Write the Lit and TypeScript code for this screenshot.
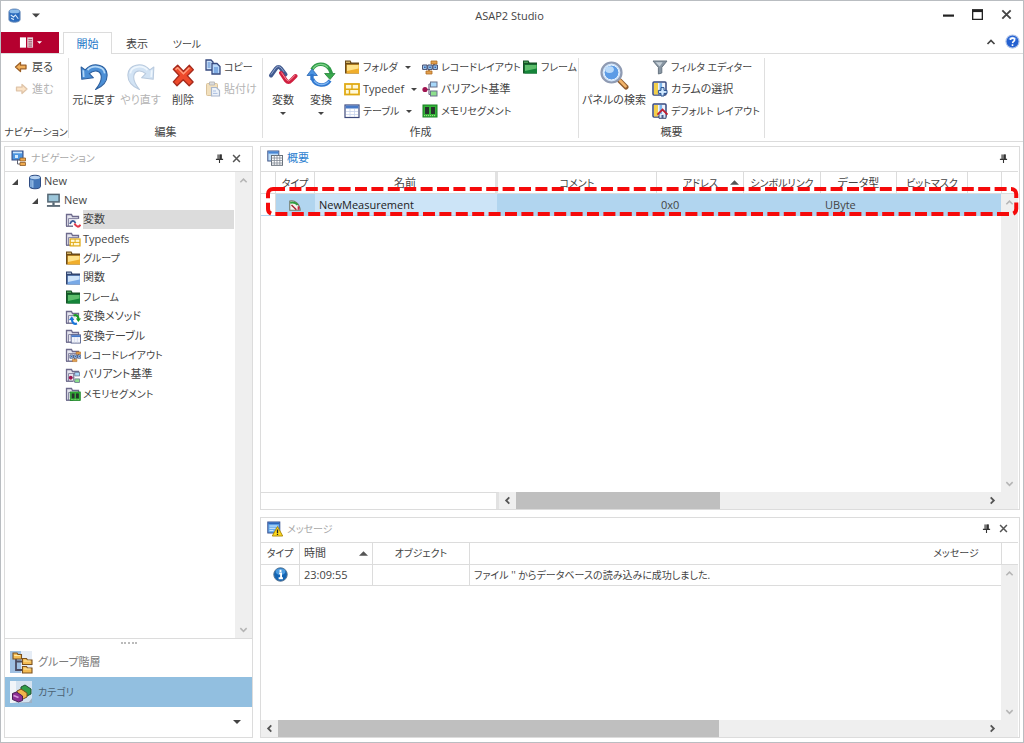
import { LitElement, html, css, svg, nothing, TemplateResult } from "lit";
import { customElement, property } from "lit/decorators.js";
import { classMap } from "lit/directives/class-map.js";

const folderBase = svg`
  <path d="M1.5 14V2.5h5l1 2h6V7" fill="#e4e4ee" stroke="#6d6a8c" stroke-width="1.3"/>
  <path d="M3.5 14V6.5h10" fill="none" stroke="#8c8aa6"/>
  <path d="M1 14.2h7" stroke="#6d6a8c" stroke-width="1.4"/>`;

const folder = (edge: string, light: string, dark: string) => svg`
  <path d="M1 14.500V1.500h5.500l1 2H15v11z" fill="${edge}"/>
  <path d="M2.500 5.500h12.500v9H2.500z" fill="${dark}"/>
  <path d="M3 6h11.500v3.500L3 12z" fill="${light}"/>
  <path d="M2 3.200h4" stroke="${light}" stroke-width="1"/>`;

const recordShape = svg`
  <path d="M9 2h6v3H9zM4 12h6v3H4z" fill="#e3a04e" stroke="#b06d22" stroke-width=".8"/>
  <path d="M12 5v2M7 10v2" stroke="#96611f" stroke-width="1.4"/>
  <path d="M.6 6h4.4v4.4H.6zM5.8 6h4.4v4.4H5.8zM11 6h4.4v4.4H11z" fill="#a9d0f5" stroke="#41486c" stroke-width="1"/>
  <path d="M2 8.2h1.7M7.2 8.2h1.7M12.4 8.2h1.7" stroke="#2d68b5" stroke-width="1.4"/>`;

const variantShape = svg`
  <path d="M3 8.5h5M7 3v10.5M7 3h3M7 13.5h3" fill="none" stroke="#706888" stroke-width="1.2"/>
  <circle cx="3" cy="8.5" r="2.6" fill="#a01450"/>
  <rect x="8.5" y="1" width="6.5" height="5" fill="#a8d8fa" stroke="#66718c"/>
  <rect x="8.5" y="10" width="6.5" height="5" fill="#8de08d" stroke="#66718c"/>`;

const memoryShape = svg`
  <rect x="1" y="2" width="14" height="12" fill="#35b53a" stroke="#178020"/>
  <rect x="3" y="4" width="4" height="7" fill="#26342c"/><rect x="9" y="4" width="4" height="7" fill="#26342c"/>
  <path d="M2 12.6h12" stroke="#a9e08a" stroke-dasharray="1 1"/>`;

const tableShape = svg`
  <rect x="1" y="2" width="14" height="12.5" fill="#fff" stroke="#3e4a7c" stroke-width="1.2"/>
  <path d="M1.5 2.5h13v3h-13z" fill="#4779c8"/>
  <path d="M6 6v8M10.5 6v8M2 8.5h12M2 11.5h12" stroke="#c9d4ee" stroke-width=".8"/>`;

const typedefShape = svg`
  <rect x="1" y="3" width="14" height="10.5" fill="#fff8d8" stroke="#e0aa14" stroke-width="1.8"/>
  <path d="M1 8.2h14M8 3v5.200M5.500 8.200v5" stroke="#e0aa14" stroke-width="1.400"/>`;

const cycleShape = svg`
  <path d="M6 9.5A10 10 0 0 1 23 8.5" fill="none" stroke="#2f9b48" stroke-width="3.6"/>
  <path d="M7 8.6A9.4 9.4 0 0 1 22 7.6" fill="none" stroke="#7fd28a" stroke-width="1.2"/>
  <path d="M18.6 13.5H29l-5 6z" fill="#39aa4d" stroke="#25803a" stroke-width=".8"/>
  <path d="M24 20.5A10 10 0 0 1 6.5 19" fill="none" stroke="#2f77cf" stroke-width="3.6"/>
  <path d="M22.8 21.4A9.4 9.4 0 0 1 8 20.6" fill="none" stroke="#83b8f2" stroke-width="1.2"/>
  <path d="M1 15.5 6 9l5.4 6.5z" fill="#4a93e2" stroke="#2b65b0" stroke-width=".8"/>
  <path d="M23 8l2.5 5.5" stroke="#2f9b48" stroke-width="3.4"/>
  <path d="M6 14v6" stroke="#2f77cf" stroke-width="3.4"/>`;

const filterBook = svg`
  <rect x="1" y="1" width="13" height="13" rx="1" fill="#eef3fc" stroke="#37497f" stroke-width="1.5"/>
  <path d="M2 2h4v11.5H2z" fill="#f3cf4b"/><path d="M7.5 2h2.6v11.5H7.5z" fill="#7fb6ec"/>`;

const undoPath = "M2 6.5 2.6 18 13.5 16.6 9.6 12.8C14 8.6 20.5 9.6 20.8 15.6 21 19.6 18.6 23.6 15.4 27.6 22.6 24.4 26.6 19 26.2 13.4 25.6 4.4 13.4 1 5.8 9.2z";

const ICONS: Record<string, [string, TemplateResult | unknown]> = {
  app: ["0 0 16 16", svg`
    <path d="M2 4c0-4 12-4 12 0v8.5c0 3.6-12 3.6-12 0z" fill="#2b6bbd" stroke="#7795bd"/>
    <ellipse cx="8" cy="3.6" rx="5.4" ry="2" fill="#8fbdea"/>
    <path d="M4 7.5l3 2 2-2 3 4M4.4 11l3 1.4" stroke="#d5e8fb" fill="none" stroke-width="1.2"/>`],
  menu: ["0 0 16 16", svg`
    <path d="M1 2.5h6.5v11H1z" fill="#fff"/><path d="M8.8 2.5H15v11H8.8z" fill="#e9d4da"/>
    <path d="M10 5h4M10 7.3h4M10 9.6h4M10 11.8h4" stroke="#8b3b50" stroke-width="1"/>`],
  back: ["0 0 16 16", svg`<path d="M2.500 8 7.500 3.500v2.700h5.500v3.600H7.500v2.700z" fill="#f2b05a" stroke="#9c5f24" stroke-width="1.300" stroke-linejoin="round"/>`],
  forward: ["0 0 16 16", svg`<path d="M14 8 9 3.500v2.700H3.500v3.600H9v2.700z" fill="#fbe3c6" stroke="#dfc4a8" stroke-width="1.300" stroke-linejoin="round"/>`],
  undo: ["0 0 28 28", svg`<path d="${undoPath}" fill="#4b8fd6" stroke="#2d5f9e" stroke-linejoin="round"/>
    <path d="M4 9.5l.4 6.4M8 9.4c4.4-5 15-4 16 3" fill="none" stroke="#b4d8f7" stroke-width="1.6"/>`],
  redo: ["0 0 28 28", svg`<g transform="translate(28 0) scale(-1 1)"><path d="${undoPath}" fill="#d2e3f4" stroke="#b9cade" stroke-linejoin="round"/>
    <path d="M4 9.5l.4 6.4M8 9.4c4.4-5 15-4 16 3" fill="none" stroke="#eef6fd" stroke-width="1.6"/></g>`],
  remove: ["0 0 28 28", svg`<path d="M5 8.6 9 5l5.4 5.6L20 5l3.6 4-5.6 5.6 5.4 6-3.6 3.4-5.6-5.6L8.4 24 5 20.4l5.4-6z" fill="#ee4a2b" stroke="#a52a1c" stroke-width="1.3" stroke-linejoin="round"/>
    <path d="M7 9l2-1.8 5.4 5.6L20 7.2" fill="none" stroke="#ff9c7c" stroke-width="1.4"/>`],
  copy: ["0 0 16 16", svg`<path d="M1 1h5l2 2v8H1z" fill="#cfe3fa" stroke="#36497f" stroke-width="1.3"/>
    <path d="M7 4.5h5l3 3V15H7z" fill="#b8d8fa" stroke="#36497f" stroke-width="1.3"/><path d="M9 9h4M9 11h4M9 13h4M2.6 4h3M2.6 6h3M2.6 8h3" stroke="#3c78c8" stroke-width=".9"/>`],
  paste: ["0 0 16 16", svg`<rect x="1.5" y="2.5" width="11" height="12" rx="1" fill="#f2e0bd" stroke="#d9c29b"/>
    <path d="M4.5 1h5v3h-5z" fill="#dcdcdc" stroke="#bbb"/><path d="M6.5 6.5h5l3 3V15h-8z" fill="#eef3fa" stroke="#a9b6cc" stroke-width="1.2"/><path d="M8 10h3M8 12.4h4.5" stroke="#a9bfe0"/>`],
  wave: ["0 0 30 30", svg`<path d="M3 15.500 8 8.500Q10.500 5.500 13 8.500L17.500 14.500" fill="none" stroke="#415a8f" stroke-width="4" stroke-linecap="round"/>
    <path d="M13 13 18 20.500Q20.500 23.500 23 20.500L27.500 16" fill="none" stroke="#d02040" stroke-width="4" stroke-linecap="round"/>
    <path d="M3 14.500 8 7.500Q10.500 4.800 13 7.800L16 11.800" fill="none" stroke="#92a6cd" stroke-width="1"/>
    <path d="M13.500 12.500 18.500 19.800Q20.500 22 22.500 19.800L27 15.200" fill="none" stroke="#f58c9c" stroke-width="1"/>`],
  cycle: ["0 0 30 30", cycleShape],
  folder: ["0 0 16 16", folder("#6b4b1a", "#ffe28a", "#f0ae2c")],
  folderBlue: ["0 0 16 16", folder("#33456f", "#cfe4fb", "#79a9e6")],
  folderGreen: ["0 0 16 16", folder("#175226", "#5dbd6b", "#15843a")],
  typedef: ["0 0 16 16", typedefShape],
  table: ["0 0 16 16", tableShape],
  record: ["0 0 16 16", recordShape],
  variant: ["0 0 16 16", variantShape],
  memory: ["0 0 16 16", memoryShape],
  search: ["0 0 30 30", svg`<path d="M19 19l8 8" stroke="#8e5a2c" stroke-width="5" stroke-linecap="round"/>
    <path d="M21 20.5l5.6 5.8" stroke="#f2b46a" stroke-width="2.6" stroke-linecap="round"/>
    <circle cx="12.5" cy="12.5" r="10" fill="#cfe4fa" stroke="#8f9bb3" stroke-width="2.2"/>
    <circle cx="12.5" cy="12.5" r="7.4" fill="#5c9ce6" stroke="#e9f3fd" stroke-width="1"/>
    <ellipse cx="10.5" cy="9.6" rx="4.4" ry="3.4" fill="#b9dafa"/>`],
  filter: ["0 0 16 16", svg`<path d="M1 2h14L9.800 8.400V14l-3.400 1V8.400z" fill="#8896a3" stroke="#697682"/><path d="M3.600 3.200h7L7.600 7.400z" fill="#c6d0d8"/>`],
  columns: ["0 0 16 16", svg`${filterBook}<path d="M9 6.600h3V9.400h3v3h-3V15H9v-2.600H6.400v-3H9z" fill="#cfe8ff" stroke="#27508f"/>`],
  home: ["0 0 16 16", svg`${filterBook}<path d="M7 11v4.300h7V11" fill="#dbe9fa" stroke="#3b4a70"/><path d="M5.400 11.600 10.500 6.600l5 5" fill="none" stroke="#c01f30" stroke-width="1.800"/><path d="M9.500 12h2v3h-2z" fill="#4a5b8c"/>`],
  help: ["0 0 16 16", svg`<circle cx="8" cy="8" r="7" fill="#2460d0" stroke="#b0c4e8" stroke-width="1.200"/><path d="M3.500 5.500C5 2 11 2 12.500 5.500z" fill="#7daaf2"/>
    <path d="M5.700 6.400C6 3.600 10.600 3.800 10.200 6.600 10 8 8.200 8 8.100 9.700M8 11v1.700" fill="none" stroke="#fff" stroke-width="1.700"/>`],
  nav: ["0 0 16 16", svg`<rect x="1" y="1" width="11" height="9" fill="#4c95e0" stroke="#35487f"/><path d="M2 2.500h9" stroke="#cfe6fc" stroke-width="1.600"/>
    <path d="M4 5h3v3H4z" fill="#d3e9fd"/><path d="M6.500 9v5h3" fill="none" stroke="#5f6272"/><path d="M9 8h5.500v3H9zM9 12.500h5.500v3H9z" fill="#efaa4e" stroke="#8f5c24" stroke-width=".8"/>`],
  overview: ["0 0 16 16", svg`<rect x=".8" y="1" width="11" height="10" fill="#bcdcf8" stroke="#3f5486"/><path d="M1.300 2.500h10" stroke="#4786d6" stroke-width="2.200"/>
    <rect x="4.500" y="5.500" width="11" height="9.800" fill="#fff" stroke="#666f7a"/><path d="M4.500 8h11M4.500 10.500h11M4.500 13h11M7.300 5.500v9.500M10 5.500v9.500M12.800 5.500v9.500" stroke="#808994" stroke-width=".8"/>`],
  message: ["0 0 16 16", svg`<rect x=".8" y="1" width="12" height="11" fill="#69acec" stroke="#38508f"/><path d="M1.400 2.400h11" stroke="#2d63b8" stroke-width="1.600"/><path d="M2.500 5h8M2.500 7.300h6M2.500 9.600h4" stroke="#d7ebfd"/>
    <path d="M10.500 5.500 15.700 15H5.300z" fill="#ffd91c" stroke="#b08c0c"/><path d="M10.500 8.500v3.400M10.500 12.700v1.200" stroke="#222" stroke-width="1.300"/>`],
  database: ["0 0 16 16", svg`<path d="M2.500 3.500c0-3 11-3 11 0v9c0 3-11 3-11 0z" fill="#4476b8" stroke="#2f4c82"/><ellipse cx="8" cy="3.500" rx="5" ry="1.700" fill="#b7d2f0"/>
    <path d="M4 5.800v7.300M5.800 6.300v7.500" stroke="#9ac0e8" stroke-width="1.300"/>`],
  device: ["0 0 16 16", svg`<rect x="2" y="1.500" width="12" height="8" fill="#9cc6da" stroke="#546673" stroke-width="1.600"/><path d="M8 10v4" stroke="#546673" stroke-width="2.400"/><path d="M1 13.800h14" stroke="#5e6d79" stroke-width="2"/>`],
  leafWave: ["0 0 16 16", svg`${folderBase}<path d="M5 12c1.500-4 4-4 5.500-1" fill="none" stroke="#3b5b96" stroke-width="1.700"/><path d="M9.500 11.500c1.800 3.600 4.200 4.200 6 1.200" fill="none" stroke="#e23a4a" stroke-width="2"/>`],
  leafTypedef: ["0 0 16 16", svg`${folderBase}<g transform="translate(4.500 6) scale(.7 .66)">${typedefShape}</g>`],
  leafCycle: ["0 0 16 16", svg`${folderBase}<path d="M8.500 6.500c3-1 5 .5 5 3.500" fill="none" stroke="#189a22" stroke-width="2.200"/><path d="M10.800 9.500H16l-2.600 3.500z" fill="#189a22"/>
    <path d="M12 14.500c-3 1-5-.8-5-4" fill="none" stroke="#1976d8" stroke-width="2.200"/><path d="M4 11h5.400L6.800 7.300z" fill="#1976d8"/>`],
  leafTable: ["0 0 16 16", svg`${folderBase}<g transform="translate(5.500 5.500) scale(.66)">${tableShape}</g>`],
  leafRecord: ["0 0 16 16", svg`${folderBase}<g transform="translate(4.500 3.500) scale(.74)">${recordShape}</g>`],
  leafVariant: ["0 0 16 16", svg`${folderBase}<g transform="translate(3.500 4.500) scale(.74)">${variantShape}</g>`],
  leafMemory: ["0 0 16 16", svg`${folderBase}<g transform="translate(4.500 4.500) scale(.72)">${memoryShape}</g>`],
  measure: ["0 0 16 16", svg`<path d="M2 14V3.500C8 2 13.500 7 14 14z" fill="#f6f4ee" stroke="#6d7868" stroke-width="1.200"/><path d="M2.500 5.500c4-.8 7 .5 8.500 2.500" fill="none" stroke="#2e9e3e" stroke-width="2.200"/>
    <path d="M12 9.500v4" stroke="#cf2440" stroke-width="2"/><path d="M4 8l5.500 5.500" stroke="#a2242f" stroke-width="1.600"/>`],
  info: ["0 0 16 16", svg`<circle cx="8" cy="8" r="7.200" fill="#1264b4" stroke="#5b7590"/><ellipse cx="8" cy="5" rx="5.200" ry="3.500" fill="#4b9be0"/><path d="M8 3v2.200M6.600 6.800H8.600V12M6 12h4.600" fill="none" stroke="#fff" stroke-width="2"/>`],
  groups: ["0 0 24 24", svg`<rect x="1" y="1" width="22" height="22" fill="#9fc0e2"/><path d="M12 1h11v22H12z" fill="#e6edf6"/>
    <path d="M7 8v12h7M7 11.500h7" fill="none" stroke="#4a4a60" stroke-width="1.800"/>
    <path d="M4 3h4l1 1.500h3.500V9H4zM13.500 8.500h4l1 1.500H23v4.500h-9.500zM13.500 16.500h4l1 1.500H23v5h-9.500z" fill="#f4bd55" stroke="#7c521f" stroke-width="1.100"/>
    <path d="M5.200 5.500h6M14.600 11h7M14.600 19h7" stroke="#ffeaa8"/>`],
  category: ["0 0 24 24", svg`<path d="M1 1h22v22H1z" fill="#d5e3f0"/><path d="M1 1h6v22H1z" fill="#f1f5f9"/><path d="M2 23l18-1 3-4v5z" fill="#9db0c4"/>
    <path d="M12 7l4-2 6 4v5l-4 2-6-4z" fill="#2e9c46" stroke="#1d5030"/><path d="M8 11l4-2 6 4v4l-4 2-6-3z" fill="#f0b54b" stroke="#77501c"/>
    <path d="M3.500 13.500l4-1.500 6 4v4.500L9.500 22l-6-2.500z" fill="#8c2f94" stroke="#472052"/><path d="M4.500 15.500l5 2" stroke="#d79adc" stroke-width="1.600"/>`],
  pin: ["0 0 10 10", svg`<path d="M2.500 .5h5v5h-5z" fill="#777"/><path d="M5.500 .5h2v5h-2zM1 5.200h8v1.400H1zM4.400 6.400h1.200V10H4.400z" fill="#333"/>`],
  close: ["0 0 10 10", svg`<path d="M1.200 1.200l7.600 7.600M8.800 1.200 1.200 8.800" stroke="currentColor" stroke-width="1.700"/>`],
  minimize: ["0 0 10 10", svg`<path d="M0 6h10" stroke="#222" stroke-width="2"/>`],
  maximize: ["0 0 10 10", svg`<path d="M.6 1h8.800v8.400H.6z" fill="none" stroke="#222" stroke-width="1.200"/><path d="M0 1.500h10" stroke="#222" stroke-width="2.600"/>`],
  up: ["0 0 10 10", svg`<path d="M1.500 7 5 3.500 8.500 7" fill="none" stroke="currentColor" stroke-width="1.700"/>`],
  down: ["0 0 10 10", svg`<path d="M1.500 3.500 5 7l3.500-3.500" fill="none" stroke="currentColor" stroke-width="1.700"/>`],
  left: ["0 0 10 10", svg`<path d="M7 1.500 3.500 5 7 8.500" fill="none" stroke="currentColor" stroke-width="2"/>`],
  right: ["0 0 10 10", svg`<path d="M3 1.500 6.500 5 3 8.500" fill="none" stroke="currentColor" stroke-width="2"/>`],
  caret: ["0 0 8 4", svg`<path d="M0 0h8L4 4z" fill="currentColor"/>`],
  sort: ["0 0 10 5", svg`<path d="M0 5h10L5 0z" fill="#555"/>`],
  expand: ["0 0 8 8", svg`<path d="M7 1v6H1z" fill="#444"/>`],
};

const icon = (name: string, width: number, height = width) => html`
  <svg class="icon" width=${width} height=${height} viewBox=${ICONS[name][0]} aria-hidden="true">${ICONS[name][1]}</svg>`;

/* Labels written in kana alone are set one step smaller than those with kanji or Latin. */
const label = (text: string) =>
  html`<span class=${classMap({ text: true, kana: /^[\u3040-\u30ff ]+$/.test(text) })}>${text}</span>`;

const base = css`
  * { box-sizing: border-box; }
  button {
    font: inherit; color: inherit; background: none; border: 0; padding: 0; margin: 0;
    display: inline-flex; align-items: center; justify-content: center; white-space: nowrap;
  }
  .icon { display: block; flex: none; }
  .kana { font-size: 10px; }
`;

@customElement("ribbon-button")
class RibbonButton extends LitElement {
  @property() icon = "";
  @property() label = "";
  @property({ type: Boolean }) large = false;
  @property({ type: Boolean }) menu = false;
  @property({ type: Boolean }) disabled = false;

  static styles = [base, css`
    :host { display: flex; }
    button { gap: 3px; height: 22px; }
    button.large { flex-direction: column; justify-content: flex-start; gap: 2px; height: 66px; padding-top: 4px; }
    .text { line-height: 16px; }
    .arrow { margin-left: 4px; }
    .large .arrow { margin: 2px 0 0; }
    button:disabled { color: #b4b4b4; }
  `];

  render() {
    return html`<button class=${classMap({ large: this.large })} ?disabled=${this.disabled}>
      ${icon(this.icon, this.large ? 30 : 16)}
      ${label(this.label)}
      ${this.menu ? html`<span class="arrow">${icon("caret", 6, 3)}</span>` : nothing}
    </button>`;
  }
}

@customElement("scroll-bar")
class ScrollBar extends LitElement {
  @property({ type: Boolean, reflect: true }) horizontal = false;
  @property({ type: Number }) thumb = 0;

  static styles = [base, css`
    :host { display: flex; flex-direction: column; width: 17px; background: #efefef; color: #b5b5b5; }
    :host([horizontal]) { flex-direction: row; width: auto; height: 17px; color: #555; }
    button { width: 17px; height: 17px; flex: none; }
    .track { flex: 1; display: flex; }
    .thumb { background: #bfbfbf; }
  `];

  render() {
    return html`
      <button aria-label="前へ">${icon(this.horizontal ? "left" : "up", 9)}</button>
      <div class="track">${this.thumb ? html`<div class="thumb" style="width:${this.thumb}%"></div>` : nothing}</div>
      <button aria-label="次へ">${icon(this.horizontal ? "right" : "down", 9)}</button>`;
  }
}

const LEAVES: [string, string][] = [
  ["leafWave", "変数"], ["leafTypedef", "Typedefs"], ["folder", "グループ"], ["folderBlue", "関数"],
  ["folderGreen", "フレーム"], ["leafCycle", "変換メソッド"], ["leafTable", "変換テーブル"],
  ["leafRecord", "レコードレイアウト"], ["leafVariant", "バリアント基準"], ["leafMemory", "メモリセグメント"],
];

@customElement("app-root")
class AppRoot extends LitElement {
  static styles = [base, css`
    :host {
      display: block; color: #444; font: 11px/16px "Open Sans", "Noto Sans CJK JP", sans-serif;
      font-feature-settings: "palt"; cursor: default;
    }
    .window { height: 100vh; display: flex; flex-direction: column; border: 1px solid #b9bdc1; background: #fff; overflow: hidden; }

    .titlebar { display: grid; grid-template-columns: 1fr auto 1fr; align-items: center; height: 31px; padding: 0 11px 2px 6px; flex: none; }
    .quick { display: flex; align-items: center; gap: 10px; }
    .title { font-size: 11px; font-weight: 400; margin: 0; }
    .controls { display: flex; justify-content: flex-end; gap: 18px; align-items: center; padding-bottom: 2px; }

    .tabs { display: flex; height: 22px; border-bottom: 1px solid #dcdcdc; flex: none; }
    .file { width: 58px; height: 21px; background: #b5002f; color: #fff; gap: 3px; }
    .tab { width: 50px; height: 22px; border: 1px solid transparent; border-bottom: 0; }
    .tab.active { width: 49px; margin-left: 4px; border-color: #dcdcdc; background: #fff; color: #2277c8; }
    .tabtools { margin-left: auto; display: flex; gap: 9px; align-items: center; padding: 0 3px 2px 0; }

    .ribbon { display: flex; height: 88px; border-bottom: 1px solid #dcdcdc; padding: 2px 0 2px 3px; flex: none; }
    .group { display: flex; flex-direction: column; justify-content: space-between; border-right: 1px solid #dfdfdf; margin: 2px 0 1px; }
    .content { display: flex; margin-top: -2px; }
    .grouplabel { text-align: center; line-height: 12px; white-space: nowrap; }
    .stack { display: flex; flex-direction: column; }
    .g-nav { width: 65px; } .g-nav .content { padding-left: 9px; }
    .g-edit { width: 194px; } .g-create { width: 316px; } .g-view { width: 186px; }
    .big { display: grid; justify-content: center; width: 38px; }
    .big.mid { width: 47px; } .big.wide { width: 70px; }
    .g-edit .content, .g-create .content { padding-left: 1px; }
    .edit-small { padding-left: 3px; }
    .col-a { width: 79px; padding-left: 4px; } .col-b { width: 100px; padding-left: 3px; } .col-c { padding-left: 3px; }
    .view-small { padding-left: 3px; }

    .workspace { flex: 1; min-height: 0; display: grid; grid-template-columns: 249px minmax(0, 1fr); gap: 7px; padding: 4px 3px; }
    .right { display: grid; grid-template-rows: minmax(0, 365fr) minmax(0, 222fr); gap: 7px; min-height: 0; }
    .panel { display: flex; flex-direction: column; border: 1px solid #dcdcdc; padding-right: 1px; min-height: 0; min-width: 0; background: #fff; }
    .panel.nav { padding-right: 0; }
    .panelhead { display: flex; align-items: center; gap: 4px; height: 24px; padding: 0 9px 2px 6px; flex: none; }
    .panelhead h2 { margin: 0; font: inherit; color: #a9a9a9; flex: 1; }
    .panelhead h2.active { color: #2c7fd0; }
    .panelhead button { width: 11px; height: 16px; }
    .nav .panelhead { padding-right: 10px; }
    .paneltools { display: flex; gap: 6px; color: #555; }

    .treearea { flex: 1; min-height: 0; display: flex; border: 1px solid #dcdcdc; border-width: 1px 0; }
    .tree { flex: 1; padding-right: 1px; }
    ul { list-style: none; margin: 0; padding: 0; }
    .node { display: flex; align-items: center; height: 19px; }
    .node .name { flex: 1; height: 19px; line-height: 17px; white-space: nowrap; }
    .level0 { padding-left: 6px; gap: 8px; }
    .level1 { padding-left: 26px; gap: 7px; }
    .level0 .name { margin-left: -7px; }
    .level1 .name { margin-left: -4px; }
    .leaves { display: grid; grid-auto-rows: 1fr; height: 194px; }
    .leaves .node { height: auto; padding-left: 60px; gap: 2px; }
    .selected .name { background: #dcdcdc; }

    .grip { height: 8px; display: flex; justify-content: center; align-items: center; flex: none; }
    .grip span { width: 16px; border-top: 2px dotted #bbb; }
    .navitem { height: 30px; justify-content: flex-start; gap: 5px; padding-left: 4px; flex: none; color: #7a7a7a; }
    .navitem.current { background: #92bfe0; color: #4c6273; }
    .overflow { height: 30px; display: flex; justify-content: flex-end; padding-right: 11px; flex: none; }

    .gridwrap { position: relative; flex: 1; min-height: 0; display: flex; flex-direction: column; }
    .grid { flex: 1; min-height: 0; display: grid; grid-template-columns: minmax(0, 1fr) 17px; grid-template-rows: 22px minmax(0, 1fr); border-top: 1px solid #dcdcdc; }
    .tableview { grid-row: 1 / 3; overflow: hidden; }
    .stub { border-left: 1px solid #dcdcdc; border-bottom: 1px solid #dcdcdc; }
    table { table-layout: fixed; border-collapse: separate; border-spacing: 0; width: 100%; }
    th, td { font-weight: 400; padding: 0 4px; height: 22px; border-right: 1px solid #dcdcdc; border-bottom: 1px solid #dcdcdc; white-space: nowrap; overflow: hidden; line-height: 20px; text-align: center; }
    td { text-align: left; }
    .overview td { background: #b1d5ef; border-color: #b1d5ef; }
    .overview td.mark { background: #fff; border-right-color: #dcdcdc; }
    .overview td.focus { background: #cce4f7; color: #222; }
    .overview th:last-child { border-right: 0; }
    .overview th.split { border-right: 3px solid #e2e2e2; }
    .center .icon { margin: 0 auto; }
    .sorted { display: flex; align-items: center; justify-content: space-between; }
    .sorted.centered::before { content: ""; width: 10px; }
    .c-mark { width: 15px; } .c-type { width: 39px; } .c-name { width: 183px; } .c-addr { width: 87px; }
    .c-link { width: 77px; } .c-data { width: 76px; } .c-mask { width: 71px; } .c-rest { width: 33px; }
    .messages { width: 1182px; }
    .messages td { height: 21px; }
    .c-time { width: 73px; } .c-object { width: 97px; }
    .line { font-size: 10px; }
    .hscroll { display: grid; grid-template-columns: minmax(0, 1fr) 17px; background: #efefef; flex: none; }
    .hscroll.frozen { grid-template-columns: 238px minmax(0, 1fr) 17px; }
    .frozenpad { background: #fff; border-top: 1px solid #dcdcdc; border-right: 3px solid #e2e2e2; }
    .highlight { position: absolute; left: 5px; top: 16px; height: 30px; width: calc(100% - 5px); overflow: visible; pointer-events: none; }
  `];

  private tools(close: boolean) {
    return html`<div class="paneltools">
      <button aria-label="固定">${icon("pin", 9)}</button>
      ${close ? html`<button aria-label="閉じる">${icon("close", 9)}</button>` : nothing}
    </div>`;
  }

  private ribbon() {
    const small = (i: string, l: string, menu = false, disabled = false) =>
      html`<ribbon-button icon=${i} label=${l} ?menu=${menu} ?disabled=${disabled}></ribbon-button>`;
    const large = (i: string, l: string, menu = false, disabled = false) =>
      html`<ribbon-button large icon=${i} label=${l} ?menu=${menu} ?disabled=${disabled}></ribbon-button>`;
    return html`<div class="ribbon">
      <section class="group g-nav">
        <div class="content"><div class="stack">${small("back", "戻る")}${small("forward", "進む", false, true)}</div></div>
        <div class="grouplabel">${label("ナビゲーション")}</div>
      </section>
      <section class="group g-edit">
        <div class="content">
          <div class="big mid">${large("undo", "元に戻す")}</div>
          <div class="big mid">${large("redo", "やり直す", false, true)}</div>
          <div class="big">${large("remove", "削除")}</div>
          <div class="stack edit-small">${small("copy", "コピー")}${small("paste", "貼付け", false, true)}</div>
        </div>
        <div class="grouplabel">編集</div>
      </section>
      <section class="group g-create">
        <div class="content">
          <div class="big">${large("wave", "変数", true)}</div>
          <div class="big">${large("cycle", "変換", true)}</div>
          <div class="stack col-a">${small("folder", "フォルダ", true)}${small("typedef", "Typedef", true)}${small("table", "テーブル", true)}</div>
          <div class="stack col-b">${small("record", "レコードレイアウト")}${small("variant", "バリアント基準")}${small("memory", "メモリセグメント")}</div>
          <div class="stack col-c">${small("folderGreen", "フレーム")}</div>
        </div>
        <div class="grouplabel">作成</div>
      </section>
      <section class="group g-view">
        <div class="content">
          <div class="big wide">${large("search", "パネルの検索")}</div>
          <div class="stack view-small">${small("filter", "フィルタ エディター")}${small("columns", "カラムの選択")}${small("home", "デフォルト レイアウト")}</div>
        </div>
        <div class="grouplabel">概要</div>
      </section>
    </div>`;
  }

  private navigation() {
    return html`<section class="panel nav">
      <div class="panelhead">${icon("nav", 16)}<h2>${label("ナビゲーション")}</h2>${this.tools(true)}</div>
      <div class="treearea">
        <ul class="tree" role="tree">
          <li role="treeitem" aria-expanded="true">
            <div class="node level0">${icon("expand", 8)}${icon("database", 16)}<span class="name">New</span></div>
            <ul role="group"><li role="treeitem" aria-expanded="true">
              <div class="node level1">${icon("expand", 8)}${icon("device", 15)}<span class="name">New</span></div>
              <ul class="leaves" role="group">${LEAVES.map(([i, name], n) => html`
                <li class=${classMap({ node: true, selected: n === 0 })} role="treeitem">${icon(i, 16)}<span class="name">${label(name)}</span></li>`)}
              </ul>
            </li></ul>
          </li>
        </ul>
        <scroll-bar></scroll-bar>
      </div>
      <div class="grip"><span></span></div>
      <button class="navitem">${icon("groups", 24)}${label("グループ階層")}</button>
      <button class="navitem current">${icon("category", 24)}${label("カテゴリ")}</button>
      <div class="overflow"><button aria-label="その他">${icon("caret", 8, 4)}</button></div>
    </section>`;
  }

  private overview() {
    return html`<section class="panel">
      <div class="panelhead">${icon("overview", 16)}<h2 class="active">概要</h2>${this.tools(false)}</div>
      <div class="gridwrap">
        <div class="grid">
          <div class="tableview">
            <table class="overview">
              <colgroup><col class="c-mark"><col class="c-type"><col class="c-name"><col><col class="c-addr"><col class="c-link"><col class="c-data"><col class="c-mask"><col class="c-rest"></colgroup>
              <thead><tr><th></th><th>${label("タイプ")}</th><th class="split">名前</th><th>${label("コメント")}</th>
                <th><div class="sorted centered">${label("アドレス")}${icon("sort", 9, 5)}</div></th>
                <th>${label("シンボルリンク")}</th><th>データ型</th><th>${label("ビットマスク")}</th><th></th></tr></thead>
              <tbody><tr><td class="mark"></td><td class="center">${icon("measure", 14)}</td><td class="focus">NewMeasurement</td><td></td>
                <td>0x0</td><td></td><td>UByte</td><td></td><td></td></tr></tbody>
            </table>
          </div>
          <div class="stub"></div>
          <scroll-bar></scroll-bar>
        </div>
        <div class="hscroll frozen"><div class="frozenpad"></div><scroll-bar horizontal thumb="43.5"></scroll-bar></div>
        <svg class="highlight" aria-hidden="true"><rect x="2" y="2" width="99.5%" height="25" rx="5" fill="none" stroke="#f50a0a" stroke-width="4" stroke-dasharray="12 4.4"/></svg>
      </div>
    </section>`;
  }

  private messages() {
    return html`<section class="panel">
      <div class="panelhead">${icon("message", 16)}<h2>${label("メッセージ")}</h2>${this.tools(true)}</div>
      <div class="gridwrap">
        <div class="grid">
          <div class="tableview">
            <table class="messages">
              <colgroup><col class="c-type"><col class="c-time"><col class="c-object"><col></colgroup>
              <thead><tr><th>${label("タイプ")}</th><th><div class="sorted">${label("時間")}${icon("sort", 9, 5)}</div></th><th>${label("オブジェクト")}</th><th>${label("メッセージ")}</th></tr></thead>
              <tbody><tr><td class="center">${icon("info", 15)}</td><td>23:09:55</td><td></td><td class="line">ファイル '' からデータベースの読み込みに成功しました.</td></tr></tbody>
            </table>
          </div>
          <div class="stub"></div>
          <scroll-bar></scroll-bar>
        </div>
        <div class="hscroll"><scroll-bar horizontal thumb="62.5"></scroll-bar></div>
      </div>
    </section>`;
  }

  render() {
    return html`<div class="window">
      <header class="titlebar">
        <div class="quick">${icon("app", 15)}<button aria-label="クイック アクセス">${icon("caret", 8, 5)}</button></div>
        <h1 class="title">ASAP2 Studio</h1>
        <div class="controls">
          <button aria-label="最小化">${icon("minimize", 11)}</button>
          <button aria-label="最大化">${icon("maximize", 11)}</button>
          <button aria-label="閉じる">${icon("close", 11)}</button>
        </div>
      </header>
      <nav class="tabs">
        <button class="file" aria-label="ファイル">${icon("menu", 15)}${icon("caret", 5, 3)}</button>
        <button class="tab active">${label("開始")}</button><button class="tab">${label("表示")}</button><button class="tab">${label("ツール")}</button>
        <div class="tabtools"><button aria-label="リボンを折りたたむ">${icon("up", 10)}</button><button aria-label="ヘルプ">${icon("help", 15)}</button></div>
      </nav>
      ${this.ribbon()}
      <main class="workspace">${this.navigation()}<div class="right">${this.overview()}${this.messages()}</div></main>
    </div>`;
  }
}
